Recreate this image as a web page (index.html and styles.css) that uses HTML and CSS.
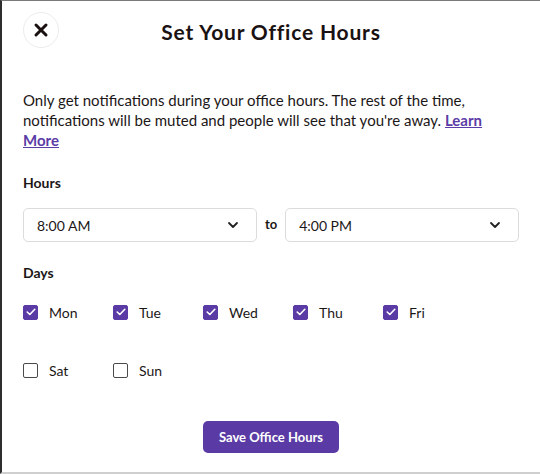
FILE: index.html
```html
<!DOCTYPE html>
<html>
<head>
<meta charset="utf-8">
<link rel="stylesheet" href="styles.css">
</head>
<body>
<div class="modal">
  <header class="head">
    <button class="close" aria-label="Close">
      <svg width="16" height="16" viewBox="0 0 16 16"><path d="M3 3L13 13M13 3L3 13" stroke="#1a1010" stroke-width="3" stroke-linecap="round"/></svg>
    </button>
    <h1 class="title">Set Your Office Hours</h1>
  </header>
  <p class="intro">Only get notifications during your office hours. The rest of the time, notifications will be muted and people will see that you're away. <a href="#" class="link">Learn More</a></p>
  <h2 class="label">Hours</h2>
  <div class="hours">
    <div class="select"><span>8:00 AM</span><svg width="12" height="8" viewBox="0 0 12 8"><path d="M2 2L6 6L10 2" fill="none" stroke="#222" stroke-width="1.8" stroke-linecap="round" stroke-linejoin="round"/></svg></div>
    <span class="to">to</span>
    <div class="select"><span>4:00 PM</span><svg width="12" height="8" viewBox="0 0 12 8"><path d="M2 2L6 6L10 2" fill="none" stroke="#222" stroke-width="1.8" stroke-linecap="round" stroke-linejoin="round"/></svg></div>
  </div>
  <h2 class="label days-label">Days</h2>
  <div class="days">
    <label class="day"><span class="box on"><svg width="10" height="8" viewBox="0 0 10 8"><path d="M1.2 4L3.8 6.5L8.8 1.3" fill="none" stroke="#fff" stroke-width="1.6" stroke-linecap="round" stroke-linejoin="round"/></svg></span>Mon</label>
    <label class="day"><span class="box on"><svg width="10" height="8" viewBox="0 0 10 8"><path d="M1.2 4L3.8 6.5L8.8 1.3" fill="none" stroke="#fff" stroke-width="1.6" stroke-linecap="round" stroke-linejoin="round"/></svg></span>Tue</label>
    <label class="day"><span class="box on"><svg width="10" height="8" viewBox="0 0 10 8"><path d="M1.2 4L3.8 6.5L8.8 1.3" fill="none" stroke="#fff" stroke-width="1.6" stroke-linecap="round" stroke-linejoin="round"/></svg></span>Wed</label>
    <label class="day"><span class="box on"><svg width="10" height="8" viewBox="0 0 10 8"><path d="M1.2 4L3.8 6.5L8.8 1.3" fill="none" stroke="#fff" stroke-width="1.6" stroke-linecap="round" stroke-linejoin="round"/></svg></span>Thu</label>
    <label class="day"><span class="box on"><svg width="10" height="8" viewBox="0 0 10 8"><path d="M1.2 4L3.8 6.5L8.8 1.3" fill="none" stroke="#fff" stroke-width="1.6" stroke-linecap="round" stroke-linejoin="round"/></svg></span>Fri</label>
    <label class="day"><span class="box"></span>Sat</label>
    <label class="day"><span class="box"></span>Sun</label>
  </div>
  <div class="actions">
    <button class="save">Save Office Hours</button>
  </div>
</div>
</body>
</html>
```
FILE: styles.css
```css
* { box-sizing: border-box; }
html, body { margin: 0; padding: 0; }
body {
  width: 540px;
  height: 474px;
  background: #fff;
  font-family: "Lato", "Open Sans", sans-serif;
  color: #1c1717;
  overflow: hidden;
}
.modal {
  height: 474px;
  border-top: 1px solid #7a7a7a;
  border-left: 2px solid #2e2e2e;
  border-bottom: 2px solid #cfcfcf;
  padding: 0 21px 0 21px;
}
.head {
  position: relative;
  height: 62px;
  display: flex;
  align-items: center;
  justify-content: center;
}
.close {
  position: absolute;
  left: 0;
  top: 11px;
  width: 36px;
  height: 36px;
  border-radius: 50%;
  border: 1px solid #ececec;
  background: #fff;
  display: flex;
  align-items: center;
  justify-content: center;
  padding: 0;
}
.title {
  margin: 0 0 0 0;
  font-size: 21px;
  font-weight: 700;
  letter-spacing: 0.8px;
  line-height: 26px;
  color: #1a1212;
}
.intro {
  margin: 27px 0 0 0;
  font-size: 15px;
  line-height: 20px;
}
.link {
  color: #5b3ba6;
  font-weight: 700;
}
.label {
  margin: 23px 0 0 0;
  font-size: 14px;
  font-weight: 700;
  line-height: 20px;
}
.hours {
  margin-top: 15px;
  display: flex;
  align-items: center;
  gap: 8px;
}
.select {
  flex: 1;
  height: 34px;
  border: 1px solid #dcdcdc;
  border-radius: 5px;
  display: flex;
  align-items: center;
  justify-content: space-between;
  padding: 0 17px 0 13px;
  font-size: 14px;
}
.to {
  font-size: 13px;
  font-weight: 700;
  margin-top: -3px;
}
.days-label { margin-top: 21px; }
.days {
  margin-top: 17px;
  display: grid;
  grid-template-columns: repeat(5, 90px);
  row-gap: 34px;
}
.day {
  display: flex;
  align-items: center;
  gap: 11px;
  font-size: 14px;
  height: 24px;
}
.box {
  width: 15px;
  height: 15px;
  border: 1.5px solid #4a4a4a;
  border-radius: 2px;
  display: flex;
  align-items: center;
  justify-content: center;
}
.box.on {
  background: #5a3aa4;
  border-color: #5a3aa4;
}
.actions {
  margin-top: 39px;
  display: flex;
  justify-content: center;
}
.save {
  background: #5a3aa4;
  color: #fff;
  border: none;
  border-radius: 5px;
  height: 32px;
  width: 136px;
  font-family: inherit;
  font-weight: 700;
  font-size: 13px;
  padding: 0;
}
```
